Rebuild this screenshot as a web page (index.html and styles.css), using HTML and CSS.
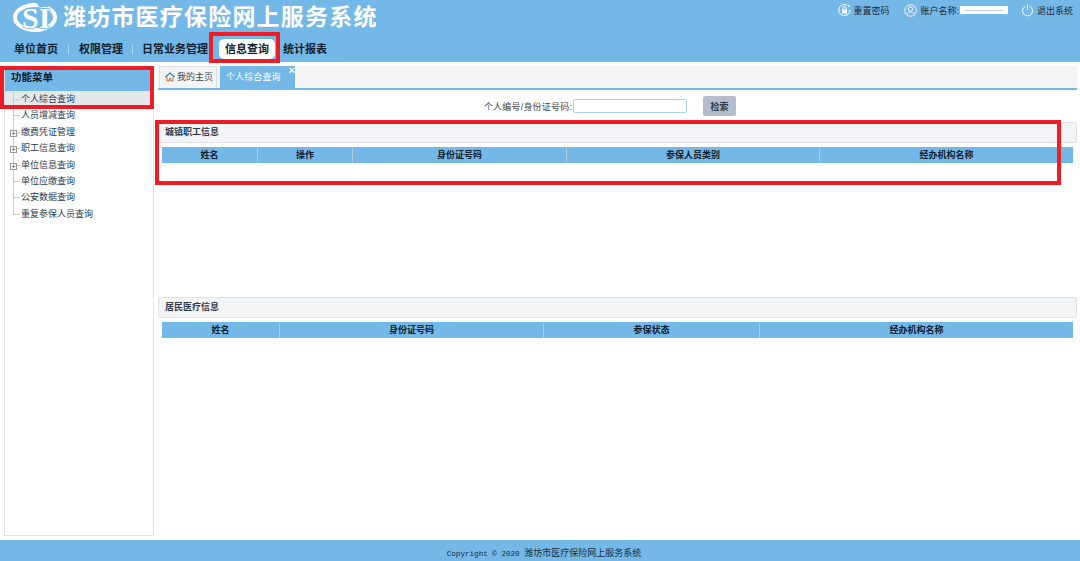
FILE: index.html
```html
<!DOCTYPE html>
<html lang="zh-CN">
<head>
  <meta charset="UTF-8">
  <title>潍坊市医疗保险网上服务系统</title>
  <link rel="stylesheet" href="styles.css">
</head>
<body>

<!-- Header -->
<div class="header">
  <div class="top-row">
    <svg class="logo" width="46" height="32" viewBox="0 0 46 32">
      <ellipse cx="23" cy="16.500" rx="20" ry="12.500" fill="none" stroke="#fff" stroke-width="4"/>
      <path d="M24 0 L36 0 L36 6 L27 6 Z" fill="#74b8e8"/>
      <text x="10" y="27" class="logo-text">SI</text>
    </svg>
    <div class="site-title">潍坊市医疗保险网上服务系统</div>
    <div class="user-bar">
      <span class="user-item">
        <svg width="13" height="13" viewBox="0 0 13 13"><path d="M9.5 1.4A5.6 5.6 0 1 0 12 6" fill="none" stroke="#fff" stroke-width="1"/><rect x="4" y="5.500" width="5" height="4" fill="#fff"/><path d="M5 5.500V4a1.500 1.500 0 0 1 3 0v1.500" fill="none" stroke="#fff"/><circle cx="11" cy="2" r="1" fill="#fff"/></svg>
        重置密码
      </span>
      <span class="user-item account">
        <svg width="13" height="13" viewBox="0 0 13 13"><circle cx="6.500" cy="6.500" r="5.800" fill="none" stroke="#fff" stroke-width="0.9"/><circle cx="6.500" cy="5" r="2.200" fill="none" stroke="#fff" stroke-width="0.9"/><path d="M2.600 10.500C3.400 8.600 5 8 6.500 8s3.100.6 3.900 2.500" fill="none" stroke="#fff" stroke-width="0.9"/></svg>
        账户名称:<span class="account-name"><i></i></span>
      </span>
      <span class="user-item logout">
        <svg width="11" height="13" viewBox="0 0 11 13"><path d="M3 2.500A5 5 0 1 0 8 2.500" fill="none" stroke="#fff" stroke-width="1"/><path d="M5.500 .8V6" stroke="#fff" stroke-width="1"/></svg>
        退出系统
      </span>
    </div>
  </div>
  <div class="nav">
    <a class="nav-item">单位首页</a>
    <span class="nav-sep"></span>
    <a class="nav-item">权限管理</a>
    <span class="nav-sep tight"></span>
    <a class="nav-item">日常业务管理</a>
    <a class="nav-item active">信息查询</a>
    <a class="nav-item">统计报表</a>
  </div>
</div>

<div class="layout">
  <!-- Side menu -->
  <div class="sidebar">
    <div class="side-title">功能菜单</div>
    <ul class="tree">
      <li class="selected">个人综合查询</li>
      <li>人员增减查询</li>
      <li class="fold">缴费凭证管理</li>
      <li class="fold">职工信息查询</li>
      <li class="fold">单位信息查询</li>
      <li>单位应缴查询</li>
      <li>公安数据查询</li>
      <li class="last">重复参保人员查询</li>
    </ul>
  </div>

  <!-- Main area -->
  <div class="main">
    <div class="tabs">
      <div class="tab home">
        <svg width="10" height="10" viewBox="0 0 10 10"><path d="M.5 5 5 1l4.500 4" fill="none" stroke="#2c6fb0" stroke-width="1.100"/><path d="M2 5v4h2.200V6.500h1.600V9H8V5" fill="none" stroke="#c9743a" stroke-width="1"/></svg>
        我的主页
      </div>
      <div class="tab current">个人综合查询<span class="tab-close">×</span></div>
    </div>

    <div class="search-row">
      <label>个人编号/身份证号码:</label>
      <input class="search-input" type="text">
      <button class="search-btn">检索</button>
    </div>

    <div class="panel panel-city">
      <div class="panel-title">城镇职工信息</div>
      <div class="grid-head city-cols">
        <div>姓名</div><div>操作</div><div>身份证号码</div><div>参保人员类别</div><div>经办机构名称</div>
      </div>
    </div>

    <div class="panel">
      <div class="panel-title">居民医疗信息</div>
      <div class="grid-head resident-cols">
        <div>姓名</div><div>身份证号码</div><div>参保状态</div><div>经办机构名称</div>
      </div>
    </div>
  </div>
</div>

<div class="footer">Copyright © 2020 <span>潍坊市医疗保险网上服务系统</span></div>

<!-- Red marks drawn over the screenshot -->
<div class="mark mark-nav"></div>
<div class="mark mark-side"></div>
<div class="mark mark-panel"></div>

</body>
</html>
```

FILE: styles.css
```css
/* Global */
html, body {
  margin: 0;
  height: 100%;
}

body {
  position: relative;
  display: flex;
  flex-direction: column;
  height: 561px;
  overflow: hidden;
  background: #fff;
  color: #222;
  font-family: "Liberation Sans", "Noto Sans CJK SC", sans-serif;
  font-size: 9px;
}

/* Header */
.header {
  height: 62px;
  background: #74b8e8;
  flex: none;
}

.top-row {
  display: flex;
  align-items: flex-start;
  height: 36px;
  padding-left: 12px;
}

.logo {
  margin-top: 1px;
}

.logo-text {
  font-family: "Liberation Serif", serif;
  font-size: 30px;
  font-weight: bold;
  fill: #fff;
  stroke: #74b8e8;
  stroke-width: 1.500px;
  paint-order: stroke;
}

.site-title {
  margin: 3px 0 0 5px;
  color: #fff;
  font-size: 23px;
  line-height: 28px;
  font-weight: bold;
  letter-spacing: 1.200px;
  white-space: nowrap;
}

.user-bar {
  display: flex;
  margin-left: auto;
  padding: 3px 7px 0 0;
  color: #1b2a38;
}

.user-item {
  display: flex;
  align-items: center;
  gap: 2px;
  height: 14px;
}

.account {
  margin-left: 15px;
  gap: 3px;
}

.logout {
  margin-left: 14px;
  gap: 4px;
}

.account-name {
  display: flex;
  align-items: center;
  width: 48px;
  height: 8px;
  margin-left: -2px;
  padding: 0 4px;
  box-sizing: border-box;
  background: #fff;
}

.account-name i {
  flex: 1;
  height: 1px;
  background: #c4d2e0;
}

/* Nav */
.nav {
  display: flex;
  align-items: center;
  height: 26px;
  padding-left: 14px;
}

.nav-item {
  color: #10202e;
  font-size: 11px;
  font-weight: bold;
  line-height: 20px;
}

.nav-item.active {
  margin: 0 8px 0 11px;
  padding: 0 6px;
  background: #fff;
  border-radius: 5px;
}

.nav-sep {
  width: 1px;
  height: 10px;
  margin: 0 10px;
  background: #a9d3f0;
}

.nav-sep.tight {
  margin: 0 9px;
}

/* Body layout */
.layout {
  display: flex;
  flex: 1;
  min-height: 0;
  padding: 4px 3px 4px 4px;
}

/* Side menu */
.sidebar {
  flex: none;
  width: 148px;
  padding-top: 2px;
  border: 1px solid #dfe3e7;
  border-top: none;
}

.side-title {
  height: 23px;
  padding-left: 6px;
  background: #74b8e8;
  color: #10202e;
  font-size: 10.500px;
  font-weight: bold;
  line-height: 19px;
}

.tree {
  margin: 0;
  padding: 0;
  list-style: none;
}

.tree li {
  position: relative;
  height: 16.400px;
  padding-left: 16px;
  color: #2d3c4c;
  line-height: 16px;
  white-space: nowrap;
}

.tree li::before {
  content: "";
  position: absolute;
  left: 8px;
  top: 0;
  width: 7px;
  height: 100%;
  background:
    linear-gradient(#ccc, #ccc) 0 0 / 1px 100% no-repeat,
    linear-gradient(#ccc, #ccc) 0 8px / 100% 1px no-repeat;
}

.tree li.last::before {
  height: 9px;
}

.tree li.selected {
  background: #e5e8ea;
}

.tree li.fold::after {
  content: "+";
  position: absolute;
  left: 5px;
  top: 6px;
  width: 5px;
  height: 5px;
  border: 1px solid #999;
  background: #fff;
  color: #333;
  font-size: 7px;
  line-height: 5px;
  text-align: center;
}

/* Tabs */
.main {
  flex: 1;
  min-width: 0;
  padding-left: 4px;
}

.tabs {
  display: flex;
  height: 22px;
  padding-left: 1px;
  background: #f3f4f6;
  border-bottom: 2px solid #74b8e8;
}

.tab {
  display: flex;
  align-items: center;
  height: 22px;
  padding-bottom: 2px;
  box-sizing: border-box;
  white-space: nowrap;
}

.tab.home {
  gap: 2px;
  width: 58px;
  padding-left: 5px;
  border: 1px solid #dcdfe3;
  border-bottom: none;
  color: #444;
}

.tab.current {
  position: relative;
  width: 75px;
  margin-left: 3px;
  padding-left: 6px;
  background: #74b8e8;
  color: #fff;
  letter-spacing: 0.100px;
}

.tab-close {
  position: absolute;
  right: 0;
  top: -1px;
  color: #fff;
  font-size: 11px;
  font-weight: bold;
  line-height: 10px;
}

/* Search */
.search-row {
  display: flex;
  align-items: center;
  justify-content: center;
  gap: 1px;
  height: 20px;
  margin: 6px 0;
  padding-right: 15px;
  color: #444;
}

.search-row label {
  letter-spacing: 0.200px;
}

.search-input {
  width: 112px;
  height: 12px;
  padding: 0;
  margin: 0;
  border: 1px solid #a9d3f0;
  border-radius: 2px;
  outline: none;
}

.search-btn {
  width: 33px;
  height: 20px;
  margin-left: 15px;
  padding: 0;
  border: none;
  border-radius: 2px;
  background: #b3bdcb;
  color: #2d3c4c;
  font-family: inherit;
  font-size: 9px;
  font-weight: bold;
}

/* Panels */
.panel-city {
  height: 175px;
}

.panel-title {
  height: 19px;
  padding-left: 6px;
  background: #f3f4f6;
  border: 1px solid #dfe1e4;
  border-radius: 2px;
  color: #2d3c4c;
  font-weight: bold;
  line-height: 19px;
}

.grid-head {
  display: grid;
  height: 16px;
  margin: 4px 4px 0;
  background: #74b8e8;
  color: #10202e;
  font-weight: bold;
  line-height: 16px;
  text-align: center;
}

.grid-head div + div {
  border-left: 1px solid #b6c9d8;
}

.city-cols {
  grid-template-columns: 95px 95px 214px 253px 1fr;
}

.resident-cols {
  grid-template-columns: 117px 264px 216px 1fr;
}

/* Footer */
.footer {
  flex: none;
  height: 21px;
  padding-left: 8px;
  background: #74b8e8;
  color: #1b2a38;
  font-family: "Liberation Mono", monospace;
  font-size: 7.600px;
  line-height: 25px;
  text-align: center;
}

.footer span {
  font-family: "Noto Sans CJK SC", sans-serif;
  font-size: 9px;
}

/* Red annotation boxes */
.mark {
  position: absolute;
  box-sizing: border-box;
  border: 4px solid #ee1c25;
}

.mark-nav {
  left: 209px;
  top: 32px;
  width: 71px;
  height: 31px;
}

.mark-side {
  left: 0;
  top: 66px;
  width: 154px;
  height: 43px;
}

.mark-panel {
  left: 155px;
  top: 120px;
  width: 906px;
  height: 65px;
}
```
